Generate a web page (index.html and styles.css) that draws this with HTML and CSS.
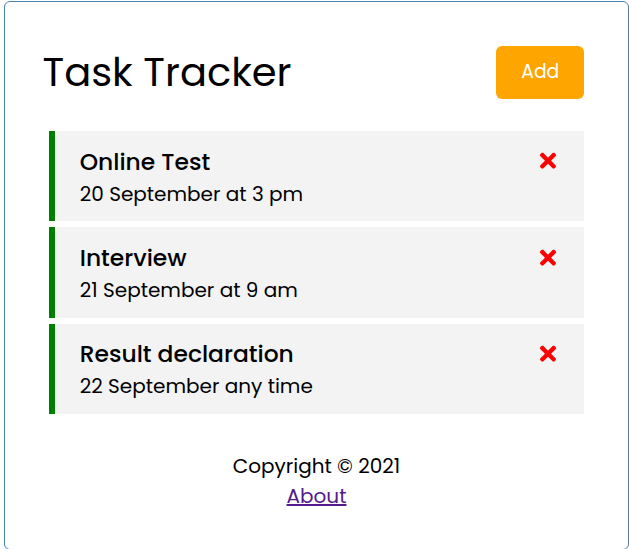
FILE: index.html
```html
<!DOCTYPE html>
<html lang="en">
<head>
<meta charset="utf-8">
<title>Task Tracker</title>
<link rel="stylesheet" href="styles.css">
</head>
<body>
<div class="container">
  <header class="header">
    <h1 class="title">Task Tracker</h1>
    <button class="btn">Add</button>
  </header>
  <div class="tasks">
    <div class="task reminder">
      <h3 class="task-title">Online Test
        <svg class="del" viewBox="0 0 352 512"><path d="M242.72 256l100.07-100.07c12.28-12.28 12.28-32.19 0-44.48l-22.24-22.24c-12.28-12.28-32.19-12.28-44.48 0L176 189.28 75.930 89.21c-12.28-12.28-32.19-12.28-44.48 0L9.21 111.45c-12.28 12.28-12.28 32.19 0 44.48L109.28 256 9.21 356.07c-12.28 12.28-12.28 32.19 0 44.48l22.24 22.24c12.28 12.28 32.2 12.28 44.48 0L176 322.72l100.07 100.07c12.28 12.28 32.2 12.28 44.48 0l22.24-22.240c12.28-12.28 12.28-32.19 0-44.48L242.72 256z"/></svg>
      </h3>
      <p class="task-day">20 September at 3 pm</p>
    </div>
    <div class="task reminder">
      <h3 class="task-title">Interview
        <svg class="del" viewBox="0 0 352 512"><path d="M242.72 256l100.07-100.07c12.28-12.28 12.28-32.19 0-44.48l-22.24-22.24c-12.28-12.28-32.19-12.28-44.48 0L176 189.28 75.930 89.21c-12.28-12.28-32.19-12.28-44.48 0L9.21 111.45c-12.28 12.28-12.28 32.19 0 44.48L109.28 256 9.21 356.07c-12.28 12.28-12.28 32.19 0 44.48l22.24 22.24c12.28 12.28 32.2 12.28 44.48 0L176 322.72l100.07 100.07c12.28 12.28 32.2 12.28 44.48 0l22.24-22.240c12.28-12.28 12.28-32.19 0-44.48L242.72 256z"/></svg>
      </h3>
      <p class="task-day">21 September at 9 am</p>
    </div>
    <div class="task reminder">
      <h3 class="task-title">Result declaration
        <svg class="del" viewBox="0 0 352 512"><path d="M242.72 256l100.07-100.07c12.28-12.28 12.28-32.19 0-44.48l-22.24-22.24c-12.28-12.28-32.19-12.28-44.48 0L176 189.28 75.930 89.21c-12.28-12.28-32.19-12.28-44.48 0L9.21 111.45c-12.28 12.28-12.28 32.19 0 44.48L109.28 256 9.21 356.07c-12.28 12.28-12.28 32.19 0 44.48l22.24 22.24c12.28 12.28 32.2 12.28 44.48 0L176 322.72l100.07 100.07c12.28 12.28 32.2 12.28 44.48 0l22.24-22.240c12.28-12.28 12.28-32.19 0-44.48L242.72 256z"/></svg>
      </h3>
      <p class="task-day">22 September any time</p>
    </div>
  </div>
  <footer class="footer">
    <p>Copyright &copy; 2021</p>
    <a class="about" href="#about">About</a>
  </footer>
</div>
</body>
</html>
```

FILE: styles.css
```css
* {
  box-sizing: border-box;
  margin: 0;
  padding: 0;
}

body {
  margin: 0;
  font-family: Poppins, "Open Sans", sans-serif;
  font-size: 20px;
  line-height: 1.5;
  color: #000;
  background: #fff;
}

.container {
  width: 625px;
  margin: 1px 0 0 4px;
  border: 1px solid steelblue;
  border-radius: 6px;
  padding: 37.5px;
}

.header {
  display: flex;
  justify-content: space-between;
  align-items: center;
  margin-bottom: 26px;
}

.title {
  font-size: 40px;
  font-weight: 400;
  line-height: 1.5;
}

.btn {
  display: inline-block;
  background: orange;
  color: #fff;
  border: none;
  padding: 12.5px 25px;
  margin: 6.25px;
  border-radius: 6px;
  font-family: inherit;
  font-size: 18.75px;
  line-height: 1.5;
  cursor: pointer;
}

.task {
  background: #f3f3f3;
  margin: 6.25px;
  padding: 12.5px 25px;
  cursor: pointer;
}

.task.reminder {
  border-left: 6.25px solid green;
}

.task-title {
  display: flex;
  justify-content: space-between;
  align-items: center;
  font-size: 23.4px;
  font-weight: 500;
  line-height: 1.5;
}

.del {
  width: 16px;
  height: 23.4px;
  fill: red;
  margin-right: 3px;
}

.task-day {
  font-size: 20px;
  line-height: 1.5;
}

.footer {
  margin-top: 37.5px;
  text-align: center;
}

.about {
  color: #551a8b;
}
```
